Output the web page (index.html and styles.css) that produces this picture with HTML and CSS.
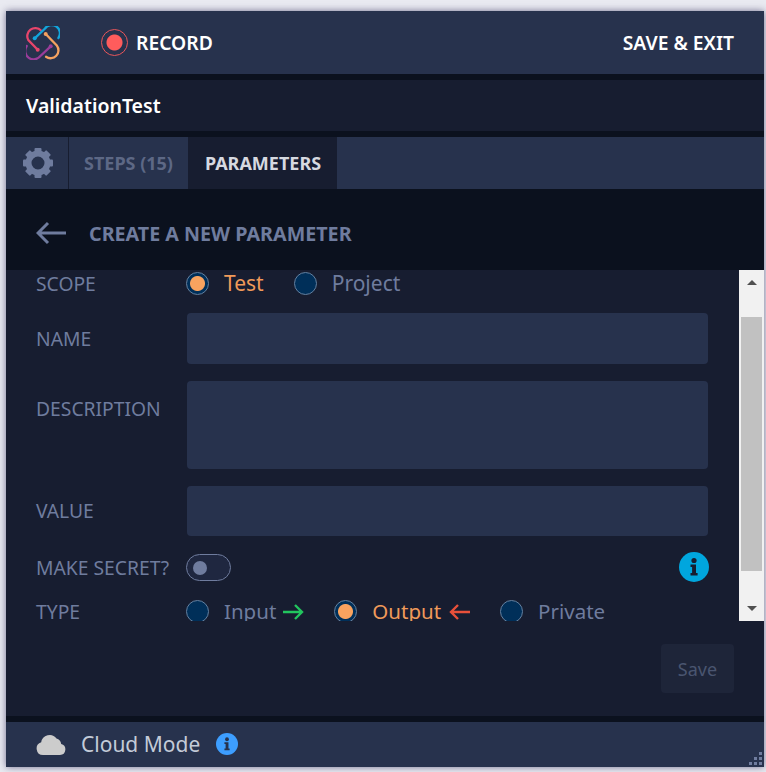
FILE: index.html
```html
<!DOCTYPE html>
<html>
<head>
	<meta charset="utf-8">
	<meta name="viewport" content="width=device-width, initial-scale=1">
	<title>Create a new parameter</title>
	<link rel="stylesheet" href="styles.css">
</head>
<body>
	<div class="window">
		<div class="topbar">
			<svg class="logo" viewBox="26 26 34 34" fill="none" stroke-width="2.3" stroke-linecap="round">
				<path stroke="#e8456b" d="M37.700 49.700L28.300 40A8 8 0 0 1 41 30.500"/>
				<path stroke="#12a5dc" d="M34.700 38.300L45 28.500A8 8 0 0 1 58.400 38"/>
				<path stroke="#f4a261" d="M45.700 34L56.800 45.500A7.900 7.900 0 0 1 46 56.800"/>
				<path stroke="#9a3d9a" d="M50.700 46.300L40.700 55.700A8.500 8.500 0 0 1 26.700 46"/>
				<circle fill="#e8456b" stroke="none" cx="37.700" cy="49.700" r="2"/>
				<circle fill="#12a5dc" stroke="none" cx="34.700" cy="38.300" r="2"/>
				<circle fill="#f4a261" stroke="none" cx="45.700" cy="34" r="2"/>
				<circle fill="#9a3d9a" stroke="none" cx="50.700" cy="46.300" r="2"/>
			</svg>
			<div class="record">
				<span class="record-dot"></span>
				<span>RECORD</span>
			</div>
			<div class="save-exit">SAVE &amp; EXIT</div>
		</div>

		<div class="titlebar">ValidationTest</div>

		<div class="tabs">
			<div class="tab tab-gear">
				<svg class="gear" viewBox="0 0 32 32">
					<circle cx="16" cy="16" r="9.500" fill="none" stroke="#6f7c9e" stroke-width="6"/>
					<g fill="#6f7c9e">
						<rect x="12.500" y="1" width="7" height="6" rx="1"/>
						<rect x="12.500" y="25" width="7" height="6" rx="1"/>
						<rect x="1" y="12.500" width="6" height="7" rx="1"/>
						<rect x="25" y="12.500" width="6" height="7" rx="1"/>
						<rect x="12.500" y="1" width="7" height="6" rx="1" transform="rotate(45 16 16)"/>
						<rect x="12.500" y="25" width="7" height="6" rx="1" transform="rotate(45 16 16)"/>
						<rect x="1" y="12.500" width="6" height="7" rx="1" transform="rotate(45 16 16)"/>
						<rect x="25" y="12.500" width="6" height="7" rx="1" transform="rotate(45 16 16)"/>
					</g>
				</svg>
			</div>
			<div class="tab tab-steps">STEPS (15)</div>
			<div class="tab tab-active">PARAMETERS</div>
		</div>

		<div class="subhead">
			<svg class="back" viewBox="0 0 30 24" fill="none" stroke="#6f7c9e" stroke-width="3">
				<path d="M30 12H3M12 2L2 12l10 10"/>
			</svg>
			<span>CREATE A NEW PARAMETER</span>
		</div>

		<div class="scroller">
			<div class="form">
				<div class="row row-scope">
					<div class="label">SCOPE</div>
					<div class="radio on"></div>
					<div class="opt opt-on">Test</div>
					<div class="radio"></div>
					<div class="opt">Project</div>
				</div>
				<div class="row row-name">
					<div class="label">NAME</div>
					<div class="field h51"></div>
				</div>
				<div class="row row-desc">
					<div class="label label-top">DESCRIPTION</div>
					<div class="field h88"></div>
				</div>
				<div class="row row-value">
					<div class="label">VALUE</div>
					<div class="field h50"></div>
				</div>
				<div class="row row-secret">
					<div class="label">MAKE SECRET?</div>
					<div class="toggle"><span class="knob"></span></div>
					<svg class="info info-big" viewBox="0 0 30 30">
						<circle cx="15" cy="15" r="15" fill="#00a6de"/>
						<circle cx="15" cy="8.500" r="2.600" fill="#171d30"/>
						<path fill="#171d30" d="M11.500 12.500h5.500v8.500h1.600v2.500h-7.100V21h1.600v-6h-1.600z"/>
					</svg>
				</div>
				<div class="row row-type">
					<div class="label">TYPE</div>
					<div class="radio"></div>
					<div class="opt opt-input">Input</div>
					<svg class="arrow arrow-green" viewBox="0 0 21 16" fill="none" stroke="#22c55e" stroke-width="2.400">
						<path d="M0 8h19M12 1l7 7-7 7"/>
					</svg>
					<div class="radio on radio-output"></div>
					<div class="opt opt-on">Output</div>
					<svg class="arrow arrow-red" viewBox="0 0 21 16" fill="none" stroke="#e8503a" stroke-width="2.400">
						<path d="M21 8H2M9 1L2 8l7 7"/>
					</svg>
					<div class="radio radio-private"></div>
					<div class="opt">Private</div>
				</div>
			</div>
			<div class="scrollbar">
				<div class="sb-btn"><span class="tri-up"></span></div>
				<div class="sb-track"><div class="sb-thumb"></div></div>
				<div class="sb-btn"><span class="tri-down"></span></div>
			</div>
		</div>

		<div class="actions">
			<div class="save">Save</div>
		</div>

		<div class="footer">
			<svg class="cloud" viewBox="0 0 30 22">
				<path fill="#cccccc" d="M7 22A6.500 6.500 0 0 1 5.200 9.300 8.500 8.500 0 0 1 20.500 5.600 6.600 6.600 0 0 1 25.200 11 5.600 5.600 0 0 1 24 22z"/>
			</svg>
			<span class="cloud-text">Cloud Mode</span>
			<svg class="info info-small" viewBox="0 0 30 30">
				<circle cx="15" cy="15" r="15" fill="#3d9eff"/>
				<circle cx="15" cy="8.500" r="2.600" fill="#27324d"/>
				<path fill="#27324d" d="M11.500 12.500h5.500v8.500h1.600v2.500h-7.100V21h1.600v-6h-1.600z"/>
			</svg>
			<svg class="grip" viewBox="0 0 13 13" fill="#6f7c9e">
				<rect x="10" y="0" width="3" height="3"/>
				<rect x="5" y="5" width="3" height="3"/>
				<rect x="10" y="5" width="3" height="3"/>
				<rect x="0" y="10" width="3" height="3"/>
				<rect x="5" y="10" width="3" height="3"/>
				<rect x="10" y="10" width="3" height="3"/>
			</svg>
		</div>
	</div>
</body>
</html>
```

FILE: styles.css
```css
html, body {
	margin: 0;
	height: 100%;
}
body {
	background: #e9eaf1;
	font-family: "Noto Sans", "Open Sans", sans-serif;
	overflow: hidden;
}
.window {
	width: 758px;
	height: 756px;
	margin: 11px 0 0 6px;
	background: #0b111e;
	box-shadow: 0 0 7px rgba(50, 45, 90, 0.65);
	display: flex;
	flex-direction: column;
}

.topbar {
	height: 63px;
	background: #27324d;
	display: flex;
	align-items: center;
	padding: 0 30px 0 20px;
	color: #fff;
	font-size: 19.300px;
	font-weight: 600;
	margin-bottom: 6px;
}
.logo {
	width: 34px;
	height: 34px;
	margin-right: 41px;
}
.record {
	display: flex;
	align-items: center;
	gap: 8px;
}
.record-dot {
	width: 25px;
	height: 25px;
	border: 1px solid #e8565a;
	border-radius: 50%;
	background: radial-gradient(circle, #ff5c5c 0 7.500px, transparent 8.500px);
}
.save-exit {
	margin-left: auto;
}

.titlebar {
	height: 51px;
	background: #171d30;
	color: #fff;
	font-size: 19.500px;
	font-weight: 600;
	display: flex;
	align-items: center;
	padding-left: 20px;
	margin-bottom: 6px;
}

.tabs {
	height: 52px;
	background: #27324d;
	display: flex;
	padding-left: 1px;
	font-size: 18px;
	font-weight: 700;
}
.tab {
	display: flex;
	align-items: center;
	justify-content: center;
	box-sizing: border-box;
}
.tab-gear {
	width: 62px;
	border-right: 1px solid #171d30;
}
.gear {
	width: 32px;
	height: 32px;
}
.tab-steps {
	width: 120px;
	color: #5d6885;
	border-right: 1px solid #171d30;
}
.tab-active {
	width: 148px;
	background: #171d30;
	color: #d6d9e0;
}

.subhead {
	height: 81px;
	box-sizing: border-box;
	padding: 7px 0 0 30px;
	display: flex;
	align-items: center;
	color: #6f7c9e;
	font-size: 19.700px;
	font-weight: 700;
}
.back {
	width: 30px;
	height: 24px;
	margin-right: 23px;
}

.scroller {
	height: 351px;
	display: flex;
	background: #171d30;
	overflow: hidden;
}
.form {
	flex: 1;
	padding-left: 30px;
	padding-right: 31px;
	color: #6f7c9e;
	font-size: 19.300px;
}
.row {
	display: flex;
	align-items: center;
}
.label {
	width: 150px;
	flex: none;
}
.label-top {
	align-self: flex-start;
	padding-top: 14px;
}
.row-scope {
	height: 27px;
}
.row-name {
	margin-top: 16px;
}
.row-desc,
.row-value {
	margin-top: 17px;
}
.row-value .label {
	padding-bottom: 2px;
}
.row-secret {
	margin-top: 18px;
	height: 27px;
}
.row-type {
	margin-top: 19px;
	height: 23px;
}
.field {
	flex: 1;
	background: #27324d;
	border-radius: 4px;
	margin-left: 1px;
}
.h51 {
	height: 51px;
}
.h88 {
	height: 88px;
}
.h50 {
	height: 50px;
}

.radio {
	width: 21px;
	height: 21px;
	flex: none;
	border: 1px solid #64809f;
	border-radius: 50%;
	background: #002f59;
}
.radio.on {
	background: radial-gradient(circle, #f9a35f 0 7px, #002f59 8px);
}
.opt {
	font-size: 21px;
	margin-left: 15px;
	margin-right: 30px;
	margin-top: -2px;
}
.opt-on {
	color: #f09a5a;
}
.row-type .opt {
	font-size: 20.500px;
	margin-right: 8px;
}
.row-type .opt-input {
	margin-right: 7px;
}
.radio-output {
	margin-left: 30px;
}
.radio-private {
	margin-left: 30px;
}
.arrow {
	width: 21px;
	height: 16px;
	flex: none;
}

.toggle {
	box-sizing: border-box;
	width: 45px;
	height: 27px;
	border: 1px solid #6f7c9e;
	border-radius: 14px;
	background: #1f2740;
	display: flex;
	align-items: center;
	padding-left: 6px;
}
.knob {
	width: 14px;
	height: 14px;
	border-radius: 50%;
	background: #6f7c9e;
}
.info-big {
	width: 30px;
	height: 30px;
	margin-left: auto;
	margin-right: -1px;
	margin-top: -2px;
}

.scrollbar {
	width: 25px;
	background: #f1f1f1;
	display: flex;
	flex-direction: column;
}
.sb-btn {
	height: 25px;
	display: flex;
	align-items: center;
	justify-content: center;
}
.tri-up {
	border: 5px solid transparent;
	border-top: 0;
	border-bottom: 5px solid #505050;
}
.tri-down {
	border: 5px solid transparent;
	border-bottom: 0;
	border-top: 5px solid #505050;
}
.sb-track {
	flex: 1;
	padding: 22px 2px 25px;
}
.sb-thumb {
	height: 254px;
	background: #c1c1c1;
}

.actions {
	height: 95px;
	background: #171d30;
	display: flex;
	justify-content: flex-end;
	align-items: flex-start;
	padding: 23px 30px 0 0;
	box-sizing: border-box;
	margin-bottom: 6px;
}
.save {
	width: 73px;
	height: 49px;
	background: #1e2539;
	border-radius: 4px;
	color: #4a5570;
	font-size: 18px;
	display: flex;
	align-items: center;
	justify-content: center;
}

.footer {
	height: 45px;
	box-sizing: border-box;
	padding: 0 0 1px 30px;
	background: #27324d;
	display: flex;
	align-items: center;
	color: #c3cbd8;
	font-size: 21px;
	position: relative;
}
.cloud {
	width: 30px;
	height: 22px;
	margin-right: 15px;
}
.info-small {
	width: 22px;
	height: 22px;
	margin-left: 16px;
}
.grip {
	position: absolute;
	right: 2px;
	bottom: 2px;
	width: 13px;
	height: 13px;
}
```
